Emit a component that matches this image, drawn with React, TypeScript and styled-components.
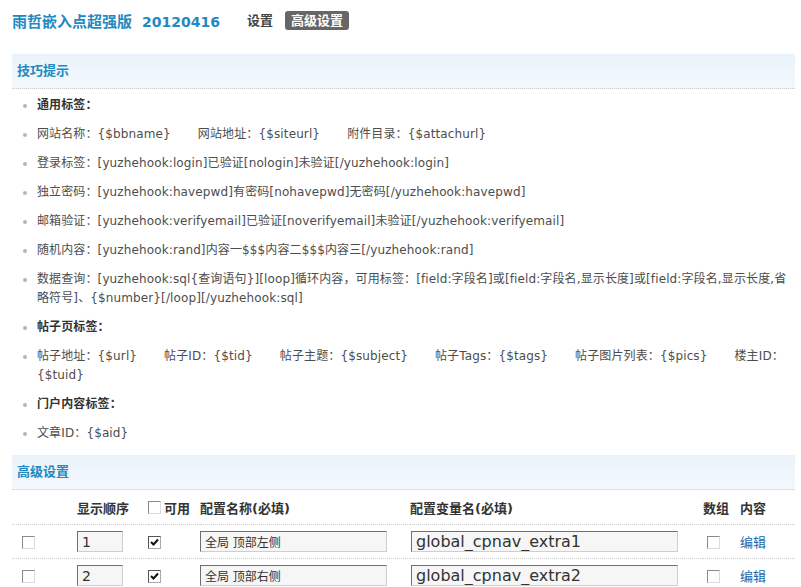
import styled, { createGlobalStyle } from "styled-components";

const GlobalStyle = createGlobalStyle`
  body {
    margin: 0;
    background: #fff;
    font-family: "DejaVu Sans", "Noto Sans CJK SC", sans-serif;
    font-size: 12px;
    color: #4d4d4d;
  }
`;

// each item is a [label, value] pair; value may be empty
const tips: { bold?: boolean; items: [string, string][] }[] = [
  { bold: true, items: [["通用标签：", ""]] },
  {
    items: [
      ["网站名称：", "{$bbname}"],
      ["网站地址：", "{$siteurl}"],
      ["附件目录：", "{$attachurl}"],
    ],
  },
  { items: [["登录标签：", "[yuzhehook:login]已验证[nologin]未验证[/yuzhehook:login]"]] },
  { items: [["独立密码：", "[yuzhehook:havepwd]有密码[nohavepwd]无密码[/yuzhehook:havepwd]"]] },
  {
    items: [
      ["邮箱验证：", "[yuzhehook:verifyemail]已验证[noverifyemail]未验证[/yuzhehook:verifyemail]"],
    ],
  },
  { items: [["随机内容：", "[yuzhehook:rand]内容一$$$内容二$$$内容三[/yuzhehook:rand]"]] },
  {
    items: [
      [
        "数据查询：",
        "[yuzhehook:sql{查询语句}][loop]循环内容，可用标签：[field:字段名]或[field:字段名,显示长度]或[field:字段名,显示长度,省略符号]、{$number}[/loop][/yuzhehook:sql]",
      ],
    ],
  },
  { bold: true, items: [["帖子页标签：", ""]] },
  {
    items: [
      ["帖子地址：", "{$url}"],
      ["帖子ID：", "{$tid}"],
      ["帖子主题：", "{$subject}"],
      ["帖子Tags：", "{$tags}"],
      ["帖子图片列表：", "{$pics}"],
      ["楼主ID：", "{$tuid}"],
    ],
  },
  { bold: true, items: [["门户内容标签：", ""]] },
  { items: [["文章ID：", "{$aid}"]] },
];

const rows = [
  { order: "1", name: "全局 顶部左侧", key: "global_cpnav_extra1" },
  { order: "2", name: "全局 顶部右侧", key: "global_cpnav_extra2" },
];

function CheckBox({ checked }: { checked?: boolean }) {
  return (
    <Box $checked={checked}>
      {checked && (
        <svg width="9" height="9" viewBox="0 0 9 9">
          <path d="M1 4 L3.5 6.5 L8 1.5" stroke="#111" strokeWidth="2" fill="none" />
        </svg>
      )}
    </Box>
  );
}

function App(): React.ReactElement {
  return (
    <Page>
      <GlobalStyle />
      <TopBar>
        <Title>
          雨哲嵌入点超强版<Version>20120416</Version>
        </Title>
        <NavItem>设置</NavItem>
        <NavItem $active>高级设置</NavItem>
      </TopBar>

      <Panel>
        <PanelHead>技巧提示</PanelHead>
        <TipList>
          {tips.map((tip, i) => (
            <Tip key={i}>
              <Bullet />
              <TipText $bold={tip.bold}>
                {tip.items.length === 1 ? (
                  <span>{tip.items[0][0] + tip.items[0][1]}</span>
                ) : (
                  tip.items.map(([label, value], j) => (
                    <span key={j}>
                      <span>{label}</span>
                      <Value $last={j === tip.items.length - 1}>{value}</Value>
                    </span>
                  ))
                )}
              </TipText>
            </Tip>
          ))}
        </TipList>
      </Panel>

      <Panel>
        <PanelHead>高级设置</PanelHead>
        <Table>
          <colgroup>
            <col style={{ width: 65 }} />
            <col style={{ width: 71 }} />
            <col style={{ width: 52 }} />
            <col style={{ width: 210 }} />
            <col style={{ width: 293 }} />
            <col style={{ width: 37 }} />
            <col style={{ width: 55 }} />
          </colgroup>
          <thead>
            <tr>
              <Th />
              <Th>显示顺序</Th>
              <Th>
                <Inline>
                  <CheckBox />
                  可用
                </Inline>
              </Th>
              <Th>配置名称(必填)</Th>
              <Th>配置变量名(必填)</Th>
              <Th>数组</Th>
              <Th>内容</Th>
            </tr>
          </thead>
          <tbody>
            {rows.map((r) => (
              <tr key={r.order}>
                <Td $pad={10}>
                  <CheckBox />
                </Td>
                <Td>
                  <TextInput $w={46} $fs={14} defaultValue={r.order} />
                </Td>
                <Td>
                  <CheckBox checked />
                </Td>
                <Td>
                  <TextInput $w={187} $fs={12} defaultValue={r.name} />
                </Td>
                <Td $pad={1}>
                  <TextInput $w={267} $fs={16} defaultValue={r.key} />
                </Td>
                <Td $pad={4}>
                  <CheckBox />
                </Td>
                <Td>
                  <EditLink href="#">编辑</EditLink>
                </Td>
              </tr>
            ))}
          </tbody>
        </Table>
      </Panel>
    </Page>
  );
}

const Page = styled.div`
  padding: 10px 6px 0 12px;
  width: 783px;
`;

const TopBar = styled.div`
  display: flex;
  align-items: center;
  height: 20px;
  margin-bottom: 24px;
`;

const Title = styled.h1`
  margin: 0 27px 0 0;
  font-size: 15px;
  font-weight: bold;
  color: #2389c0;
  white-space: nowrap;
`;

const Version = styled.span`
  margin-left: 10px;
  font-size: 14px;
`;

const NavItem = styled.span<{ $active?: boolean }>`
  font-size: 13px;
  font-weight: bold;
  line-height: 19px;
  padding: 0 6px;
  margin-right: 6px;
  border-radius: 3px;
  color: ${({ $active }) => ($active ? "#fff" : "#444")};
  background: ${({ $active }) => ($active ? "#666" : "transparent")};
  ${({ $active }) => (!$active ? "padding: 0; margin-right: 12px;" : "")}
`;

const Panel = styled.section``;

const PanelHead = styled.div`
  height: 34px;
  line-height: 34px;
  padding-left: 5px;
  font-size: 13px;
  font-weight: bold;
  color: #2389c0;
  background: linear-gradient(#eaf3fb, #f3f8fd);
  border-bottom: 1px dotted #ccc;
`;

const TipList = styled.ul`
  list-style: none;
  margin: 0;
  padding: 7px 0 2px;
`;

const Tip = styled.li`
  display: flex;
  align-items: flex-start;
  line-height: 19px;
  margin-bottom: 10px;
`;

const Bullet = styled.span`
  flex: none;
  width: 4px;
  height: 4px;
  border-radius: 50%;
  background: #b5b5b5;
  margin: 8px 10px 0 11px;
`;

const TipText = styled.div<{ $bold?: boolean }>`
  flex: 1;
  letter-spacing: 0.12px;
  font-weight: ${({ $bold }) => ($bold ? "bold" : "normal")};
  color: ${({ $bold }) => ($bold ? "#333" : "#4d4d4d")};
`;

const Value = styled.span<{ $last?: boolean }>`
  margin-right: ${({ $last }) => ($last ? "0" : "27px")};
`;

const Table = styled.table`
  width: 783px;
  border-collapse: collapse;
  table-layout: fixed;
`;

const Th = styled.th`
  height: 34px;
  padding: 0;
  text-align: left;
  font-size: 13px;
  font-weight: bold;
  color: #333;
  white-space: nowrap;
  border-bottom: 1px dotted #ccc;
`;

const Td = styled.td<{ $pad?: number }>`
  height: 33px;
  padding: 0 0 0 ${({ $pad }) => $pad ?? 0}px;
  border-bottom: 1px dotted #ccc;
`;

const Inline = styled.span`
  display: inline-flex;
  align-items: center;
  gap: 3px;
`;

const Box = styled.span<{ $checked?: boolean }>`
  display: inline-flex;
  align-items: center;
  justify-content: center;
  vertical-align: middle;
  box-sizing: border-box;
  width: 13px;
  height: 13px;
  background: #fff;
  border: 1px solid;
  border-color: ${({ $checked }) =>
    $checked ? "#555 #aaa #aaa #555" : "#8a8a8a #dcdcdc #dcdcdc #8a8a8a"};
`;

const TextInput = styled.input<{ $w: number; $fs: number }>`
  box-sizing: border-box;
  width: ${({ $w }) => $w}px;
  height: 21px;
  padding: 0 4px;
  vertical-align: middle;
  font-family: "DejaVu Sans", "Noto Sans CJK SC", sans-serif;
  font-size: ${({ $fs }) => $fs}px;
  color: #333;
  background: #f6f6f6;
  border: 1px solid;
  border-color: #6f6f6f #cfcfcf #cfcfcf #6f6f6f;
  outline: none;
`;

const EditLink = styled.a`
  color: #2366a8;
  font-size: 13px;
  text-decoration: none;
`;

export default App;
